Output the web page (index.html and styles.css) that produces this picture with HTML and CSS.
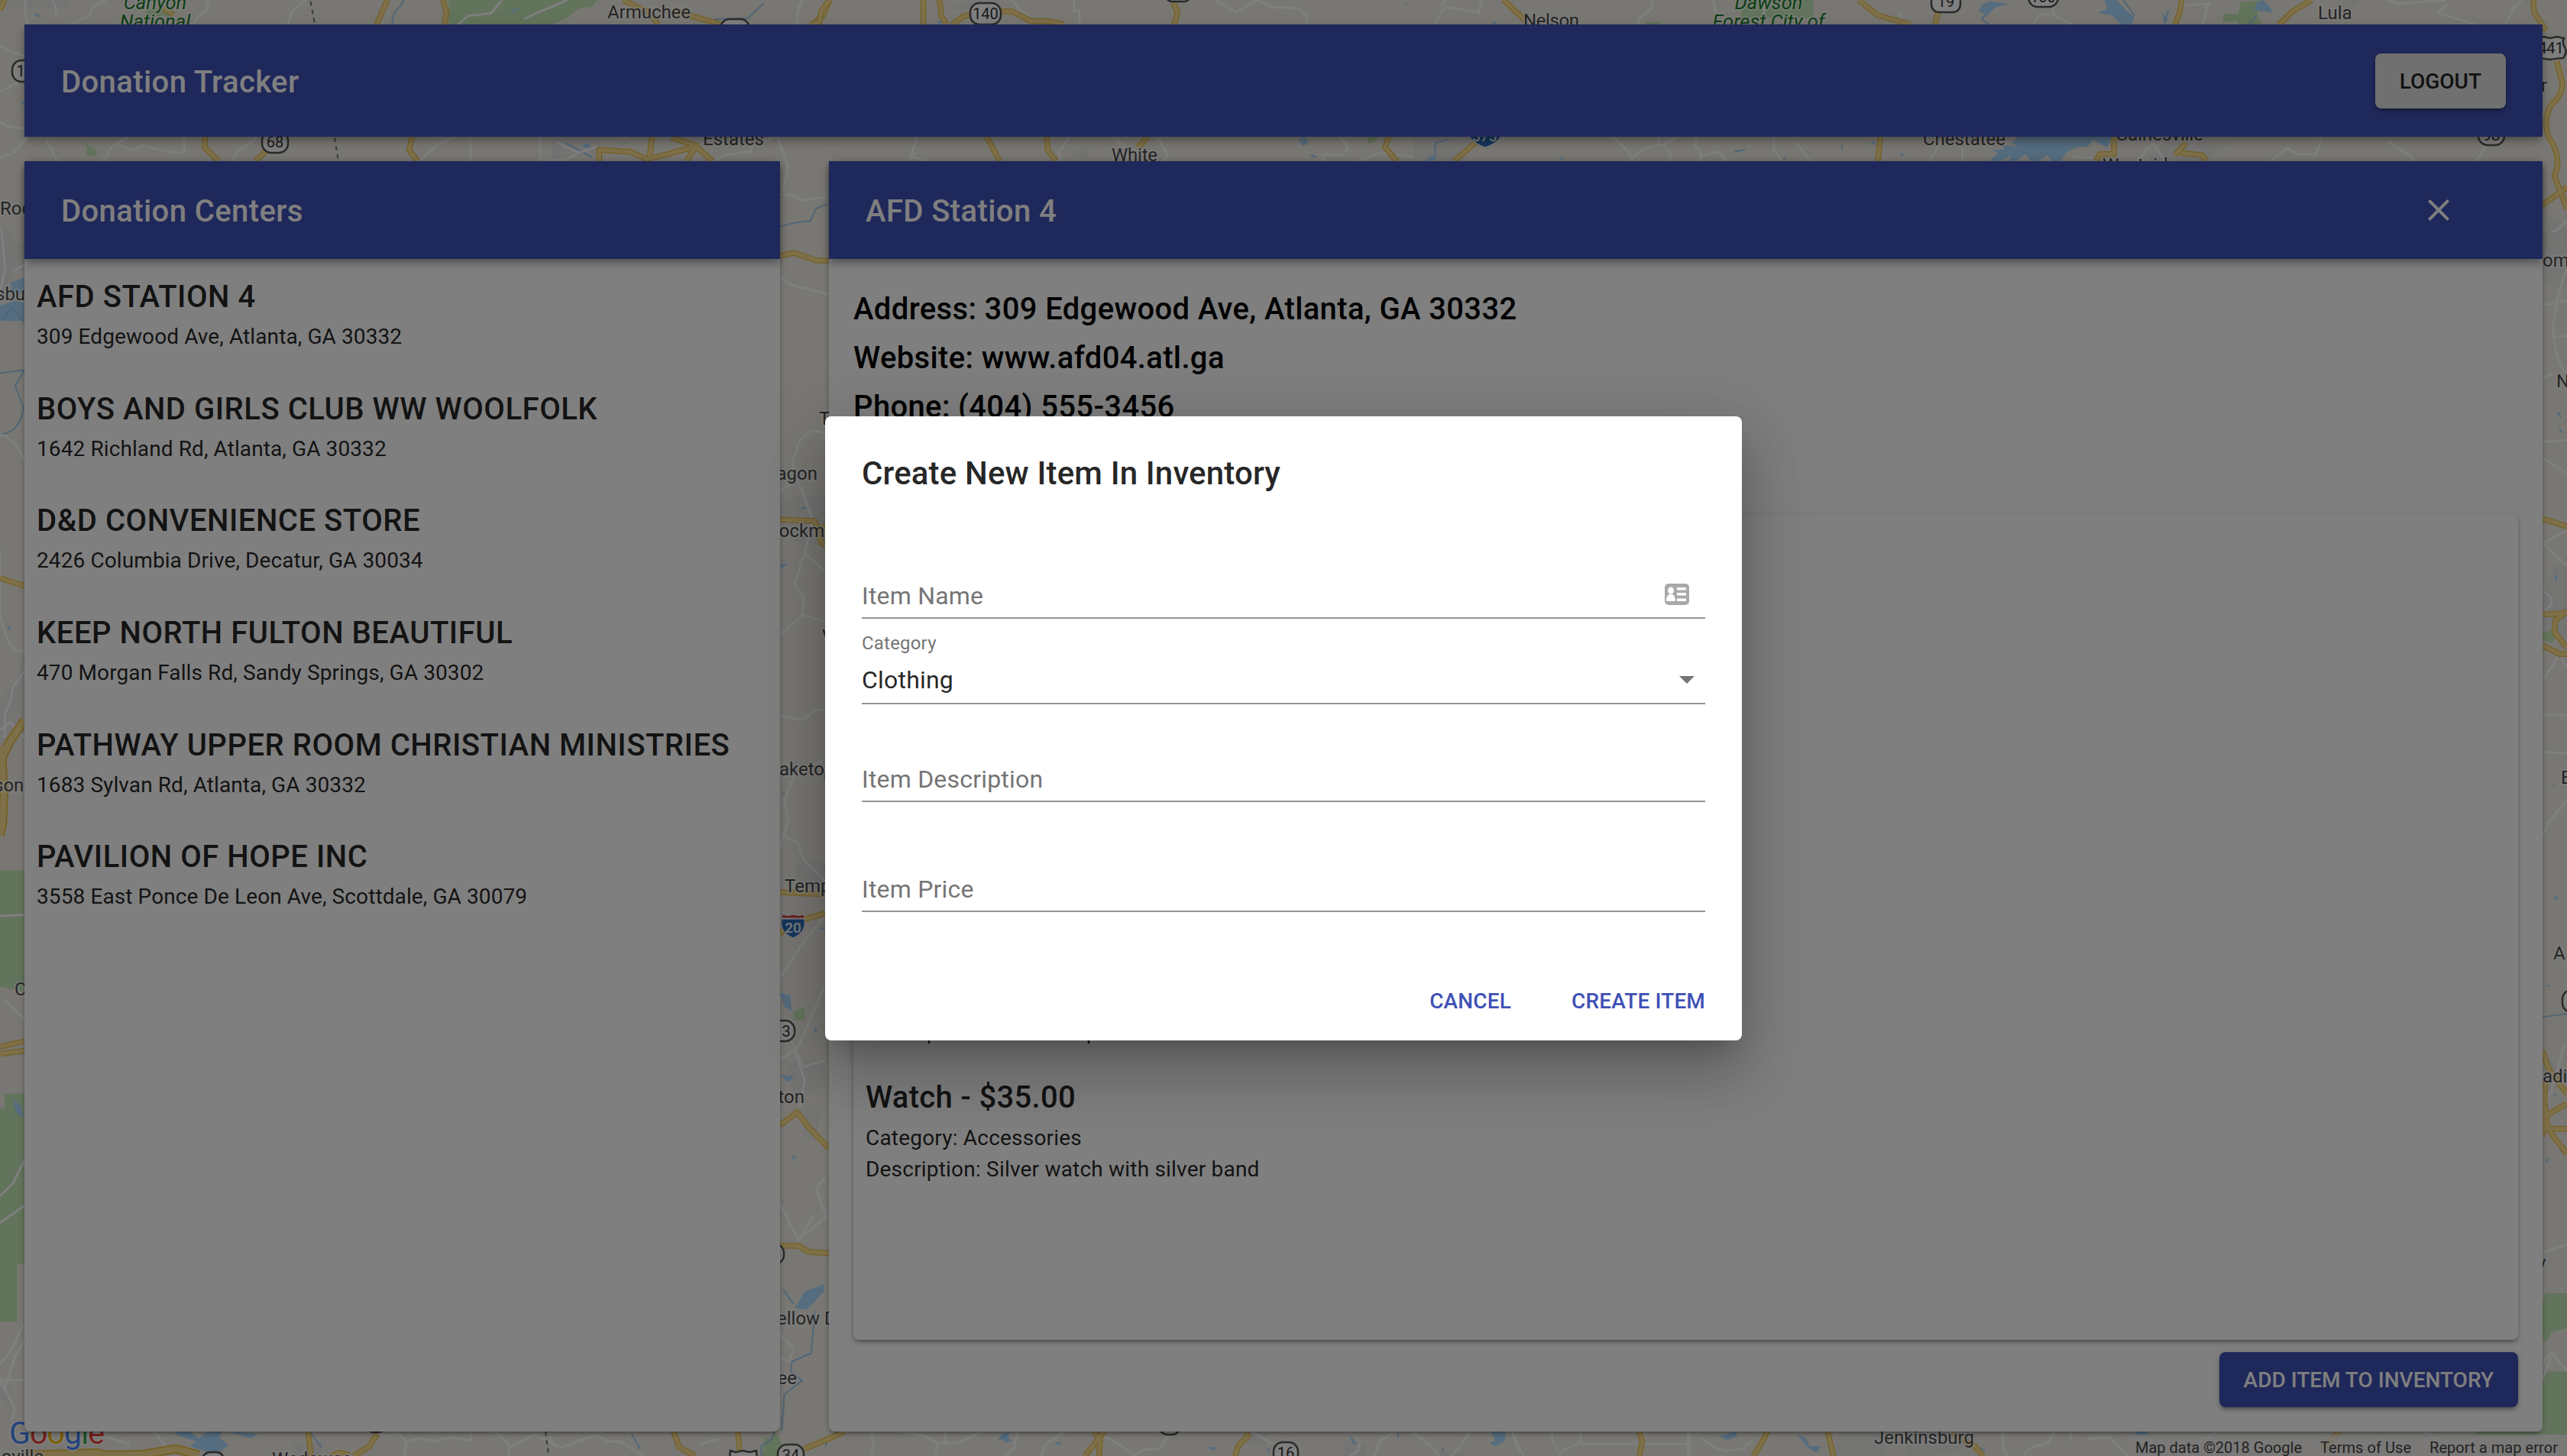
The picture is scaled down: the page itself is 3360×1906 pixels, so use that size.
FILE: index.html
```html
<!DOCTYPE html>
<html lang="en">
<head>
<meta charset="utf-8">
<title>Donation Tracker</title>
<link rel="stylesheet" href="styles.css">
</head>
<body>
<svg class="map" viewBox="0 0 3360 1906" aria-hidden="true">
  <rect class="land" width="3360" height="1906"/>

  <!-- north-west -->
  <g transform="scale(.7143 .3333)">
    <path class="urban" d="M0 0H130L120 30H0ZM0 930L45 960V1060L0 1090ZM1010 537H1100V600L1010 620Z"/>
    <path class="park" d="M822 0H1095L1085 28L1062 32L1040 68L1008 100H822ZM148 537L160 570L178 590L176 614L158 608L160 580ZM268 40L300 30L320 70L300 62L268 62Z"/>
    <path class="water" d="M62 50L72 58L74 68L65 62ZM935 38L953 32L942 48ZM1068 570L1076 562L1082 574L1074 586ZM1140 562L1148 560L1142 572ZM40 400L48 395V412H40ZM18 1110L45 1090V1130L34 1125L24 1130ZM0 1200L30 1180L45 1190V1260H0Z"/>
    <path class="stream" d="M720 96Q715 60 735 20L740 0M1310 75L1370 72L1400 12M1035 560L1085 618M1429 890L1455 875L1485 867L1495 820L1518 800"/>
    <path class="minor" d="M48 0Q42 55 52 96M102 60Q105 30 95 0M130 96L165 60L170 25L195 0M378 0Q388 40 365 60L355 96M560 0L535 45L528 96M840 96L858 62L900 52L920 0M960 75L985 50L1040 0M1460 96Q1460 40 1472 0M0 180Q20 210 45 218M45 310L0 360M0 480L15 498L45 505M0 620L25 600L50 540M85 550L105 632M190 632L205 575L235 537M215 565L245 590L260 570L295 590L335 602M338 600V537M428 632Q430 590 460 560L470 537M770 632L800 570L835 537M862 537V632M990 537V628H1038L1060 600L1020 560M1060 600L1095 575M1310 632L1325 610L1375 595L1385 540M1425 537L1445 660L1435 740M1429 765L1450 765L1470 788L1515 773M1429 1090L1450 1120L1518 1155M0 900Q15 970 0 1000M0 1090L45 1040"/>
    <path class="major-case" d="M0 40L8 0M300 30L318 60M710 0L690 96M812 0L818 50L815 96M1142 0L1170 30L1190 50L1206 96M1235 40L1270 65L1320 94L1320 85M1520 0L1508 60L1490 96M376 537L375 580L400 632M495 580L468 632M755 537L750 590L765 632M1098 632V588L1155 596L1185 625L1225 605L1275 575L1305 632M1190 620L1195 537M1275 575L1258 632M1230 540L1280 575M1429 1005L1455 993L1495 1023H1518"/>
    <path class="major" d="M0 40L8 0M300 30L318 60M710 0L690 96M812 0L818 50L815 96M1142 0L1170 30L1190 50L1206 96M1235 40L1270 65L1320 94L1320 85M1520 0L1508 60L1490 96M376 537L375 580L400 632M495 580L468 632M755 537L750 590L765 632M1098 632V588L1155 596L1185 625L1225 605L1275 575L1305 632M1190 620L1195 537M1275 575L1258 632M1230 540L1280 575M1429 1005L1455 993L1495 1023H1518"/>
    <path class="border" d="M569 5L577 96M613 540L620 632"/>
  </g>

  <!-- north -->
  <g transform="translate(1000) scale(.7143 .3571)">
    <path class="urban" d="M340 40L360 10L400 0V30ZM560 570L595 530V590ZM1190 501H1300L1270 591L1190 580Z"/>
    <path class="park" d="M1108 501H1125L1118 520L1106 528Z"/>
    <path class="water" d="M980 510L990 498L998 522L988 536ZM318 75L328 82L320 90ZM1172 8L1180 12L1176 16ZM1455 578L1465 576L1462 586ZM1210 591L1225 570L1232 586Z"/>
    <path class="stream" d="M1230 580V525L1255 510M1002 568L1012 578M1335 80L1342 90"/>
    <path class="minor" d="M62 90Q60 30 70 0M455 0L468 35L485 60L492 90M568 0V40L578 38V90M828 0L865 45L890 15L905 0L930 25L980 30L995 60V90M1228 90L1248 25L1310 45L1315 0M1240 20L1250 0M0 520L20 501M268 585L280 501M268 575L300 590M545 591L540 560L560 501M640 501L665 545L668 591M720 501L740 570L730 591M1025 591V568H1060L1070 540L1055 501M1090 591L1130 560L1190 575"/>
    <path class="major-case" d="M120 0L105 40L102 80L85 90M292 0V90M322 0L325 60L335 90M345 90L365 60L380 52M430 42H455L490 78L525 78L550 90M750 10L758 45L752 90M1355 0L1395 75M408 501L432 591M518 501L520 550L535 591M704 501L685 540M1145 501L1138 540L1160 591M1305 520L1265 591"/>
    <path class="major" d="M120 0L105 40L102 80L85 90M292 0V90M322 0L325 60L335 90M345 90L365 60L380 52M430 42H455L490 78L525 78L550 90M750 10L758 45L752 90M1355 0L1395 75M408 501L432 591M518 501L520 550L535 591M704 501L685 540M1145 501L1138 540L1160 591M1305 520L1265 591"/>
  </g>
  <g transform="translate(2080) scale(.3333)">
    <path class="park" d="M219 87H281V98H219Z"/>
    <path class="minor" d="M246 0V30Q240 42 210 60Q190 75 194 96M486 0Q496 20 494 50M92 537Q150 590 163 610V632M165 632Q190 590 248 575L290 568L350 537M272 537L276 568M298 568L305 590L320 605V632M425 537L415 575L435 590L440 632M440 615Q480 597 512 598L540 632"/>
    <path class="stream" d="M570 596L600 590"/>
  </g>

  <!-- north-east -->
  <g transform="translate(2240) scale(.7143 .3333)">
    <path class="urban" d="M1130 60L1160 0H1190L1160 50ZM830 560H960L900 632H800ZM1530 880L1550 850L1568 900V1130L1540 1120Z"/>
    <path class="park" d="M55 0H187V70H55ZM970 10L1010 0L1000 60L1010 95H965V85H938V55H965ZM650 560L668 555V585L652 590Z"/>
    <path class="water" d="M495 20L510 5L545 15L520 30L505 60L490 45ZM720 0H742L760 40L775 68L770 96H750L735 60L708 50L725 35ZM995 40L1000 10L1012 0L1020 20L1030 50ZM825 45L838 80L830 85ZM562 537H735L725 580L700 550L690 575L668 580L650 600L640 632H625L615 610L600 632H585L575 605L560 632H545L550 610L530 632H510L525 600L515 590L540 585L530 570L560 575L550 560ZM293 555H300V567H293ZM345 603L355 605L348 615Z"/>
    <path class="stream" d="M505 60Q485 70 510 96M775 60L755 0M838 40L830 96M1000 60L985 96M45 595L62 587M130 632L136 618M240 570L238 585"/>
    <path class="minor" d="M95 60L100 0M345 45L352 96M590 96L600 60L625 55L660 96M625 55L630 0M865 20L915 15M910 20L900 96M1240 0L1260 15L1345 0M1350 15L1330 50L1400 96M1455 96L1470 30L1485 0M0 598Q22 598 25 632M115 537V590L130 632M155 560L170 600L180 632M400 632L420 560L410 540M460 580V632M660 615L700 620M810 560L780 632M810 560L830 632M1025 632L1055 582L1075 606H1108L1120 537M1240 555L1280 610L1288 632M1420 570L1402 632M1523 920L1545 910L1568 870M1523 1200L1568 1180M1545 1070L1568 960"/>
    <path class="major-case" d="M270 0L305 60L365 96M415 50L410 96M862 0L858 50L850 96M1100 0L1065 45L1040 96M1506 0L1508 50L1530 120M310 537L305 632M738 537V605H712L705 632M870 560L850 610M860 600L900 610L907 632M1549 240L1560 330Q1560 370 1540 410Q1522 470 1535 540Q1560 620 1545 690Q1555 750 1568 820M1523 805L1568 735"/>
    <path class="major" d="M270 0L305 60L365 96M415 50L410 96M862 0L858 50L850 96M1100 0L1065 45L1040 96M1506 0L1508 50L1530 120M310 537L305 632M738 537V605H712L705 632M870 560L850 610M860 600L900 610L907 632M1549 240L1560 330Q1560 370 1540 410Q1522 470 1535 540Q1560 620 1545 690Q1555 750 1568 820M1523 805L1568 735"/>
  </g>

  <!-- west edge -->
  <g transform="translate(0 300) scale(.3333 1.0242)">
    <path class="urban" d="M0 0H45L50 60L0 90ZM60 580L96 540V640L0 690V600Z"/>
    <path class="park" d="M0 820H96V975L0 968ZM18 1105H96V1323H68V1397H0V1124H18Z"/>
    <path class="water" d="M38 76L96 62V84L60 82ZM28 510L42 506L38 514ZM50 1112L80 1120L96 1136L60 1128Z"/>
    <path class="stream" d="M0 184L96 180M0 262Q80 260 92 228L60 200L96 180M10 115L50 100L96 120"/>
    <path class="minor" d="M5 0Q15 30 20 50L0 80M0 262Q60 268 96 295M0 410V490Q30 545 96 540M96 565L52 585L40 605L20 620V650M0 878L96 876M20 985L96 1010M0 1236L50 1220L96 1190M0 1270L96 1248M96 1420L60 1440L0 1500M0 640L40 630L96 650"/>
    <path class="major-case wide" d="M96 628L38 655L10 675L0 690M5 660L15 720L10 760L0 775"/>
    <path class="major wide" d="M96 628L38 655L10 675L0 690M5 660L15 720L10 760L0 775"/>
    <path class="major-case" d="M0 446L96 456M0 1054L96 1050M0 1045L96 1038"/>
    <path class="major" d="M0 446L96 456M0 1054L96 1050M0 1045L96 1038"/>
  </g>

  <!-- gap between the panels -->
  <g transform="translate(1000 500) scale(.3333 .8967)">
    <path class="urban" d="M63 170L240 165V235L150 240L63 215ZM125 700H240V740H125ZM170 1055L230 1060L200 1110L150 1100ZM75 990H240V1030L120 1040Z"/>
    <path class="park" d="M115 918L160 914V930L120 932ZM0 1540L45 1546V1568H0Z"/>
    <path class="water" d="M63 892L105 896L107 918L80 912ZM63 1012L120 1014L95 1022ZM195 942L210 944L203 952ZM120 1352L160 1328L235 1317V1328L170 1354ZM68 600L80 598V602ZM63 266L95 265L70 272ZM110 1128L125 1132L115 1137ZM215 798L240 795V800Z"/>
    <path class="stream" d="M75 1325L115 1345M200 1356L185 1418L110 1430L105 1445L150 1458L80 1478L70 1530M145 185L165 183M235 570L240 580"/>
    <path class="minor" d="M240 75L190 70L140 85L110 118L135 142L63 160M135 145L190 200L160 250L120 295L155 315L150 340L240 350M160 250L235 275M155 340L63 368M63 488L150 493L200 480L240 478M63 680L95 640L80 610L120 575L240 550M63 660L130 672L160 700L240 728M63 870L150 820L240 780M63 940L130 975L240 880M63 990L120 975L155 1000L240 990M120 975L160 1020L140 1060M240 1160L205 1180L245 1218L135 1253M63 1200L135 1253L195 1217M63 1390L115 1410L100 1430L63 1425"/>
    <path class="major-case" d="M63 201L200 203L225 235L240 238M225 208L240 225M63 745L240 748M63 806L100 790L240 776M63 1085L130 1066L180 1090L255 1119M63 1261H135L175 1270L255 1272"/>
    <path class="major" d="M63 201L200 203L225 235L240 238M225 208L240 225M63 745L240 748M63 806L100 790L240 776M63 1085L130 1066L180 1090L255 1119M63 1261H135L175 1270L255 1272"/>
  </g>

  <!-- east edge -->
  <g transform="translate(3260 300) scale(.3333 1.0242)">
    <path class="urban" d="M204 0L300 10V60L260 76L204 70ZM204 470L250 430L300 420V520L204 525ZM204 1050L290 1080L204 1120Z"/>
    <path class="park" d="M204 515L245 513L255 522L240 529L204 525ZM204 1370L215 1360H300V1405L240 1410L225 1420L204 1422ZM204 1460H300V1540H204Z"/>
    <path class="water" d="M250 852L270 854L255 858ZM245 1106H262L250 1110ZM215 1190L230 1186L222 1194ZM250 445L262 440L258 452ZM240 712L252 710V713Z"/>
    <path class="stream" d="M204 1007L300 1003M262 234L277 240M270 256L282 260M222 966L232 968"/>
    <path class="minor" d="M300 50Q250 90 245 135Q260 170 300 185M245 137H300M204 190L245 185M204 272L300 270M204 292L300 312M204 402L300 385M204 402L300 430M204 462L235 470L240 480L204 490M204 620L300 622M204 668L300 670M204 775L235 755L300 730M204 578L270 543L300 560M204 1308L300 1298M204 1450L240 1435L300 1460M204 1470L240 1440M290 1042L240 1100L204 1120"/>
    <path class="major-case" d="M204 370L300 380M204 492H245L300 490M300 488L255 500L250 515L300 535M204 532L270 543H300M204 1050L230 1075L300 1105M204 1100L225 1150L300 1182M204 1135L300 1118M204 1150H300M215 1090L204 1160"/>
    <path class="major" d="M204 370L300 380M204 492H245L300 490M300 488L255 500L250 515L300 535M204 532L270 543H300M204 1050L230 1075L300 1105M204 1100L225 1150L300 1182M204 1135L300 1118M204 1150H300M215 1090L204 1160"/>
  </g>

  <!-- south-west -->
  <g transform="translate(0 1600) scale(.7653 .3333)">
    <path class="urban" d="M500 870L550 860V918H500ZM0 650H20V740L0 700Z"/>
    <path class="park" d="M1325 822L1340 880L1330 918H1300L1310 880Z"/>
    <path class="water" d="M300 822H325L340 850L355 822H380L375 845L390 875L370 918L345 895L325 880L335 860L300 835ZM390 822L440 830L430 850Z"/>
    <path class="stream" d="M530 822L550 885M1335 760L1320 850L1302 880V918M1080 830L1095 890M1415 850L1412 880"/>
    <path class="minor" d="M40 400L20 500L0 560M0 620H40M0 620L25 730L20 780M265 822L285 890M180 840L220 870L215 918M635 822L660 840L680 832L695 860L715 848L740 862L770 845L805 858V822M695 855L692 918M845 822L870 870V918M870 885L915 835L960 885L1020 835L1040 862L1060 860L1100 918M950 885L940 840M1230 850L1200 870M1490 822L1495 870L1490 918"/>
    <path class="major-case wide" d="M50 914L165 906L180 914L245 912L300 890L340 914"/>
    <path class="major wide" d="M50 914L165 906L180 914L245 912L300 890L340 914"/>
    <path class="major-case" d="M527 822L532 918M645 830L632 880L605 918M1152 822L1162 885L1190 918M1262 822L1265 895M1445 822L1375 892M565 918L580 905L598 915"/>
    <path class="major" d="M527 822L532 918M645 830L632 880L605 918M1152 822L1162 885L1190 918M1262 822L1265 895M1445 822L1375 892M565 918L580 905L598 915"/>
    <path class="border" d="M933 822L938 910"/>
  </g>

  <!-- south -->
  <g transform="translate(1180 1866) scale(.6633 .3333)">
    <path class="urban" d="M685 24H720V80L660 70ZM875 60L917 70V120H873ZM1060 105H1110V120H1060Z"/>
    <path class="water" d="M200 30L212 28L210 50L218 58L206 68L200 55L190 60ZM303 68L312 64L316 74L304 74ZM606 86L620 84V94L612 98ZM1163 24H1193L1190 60L1172 82L1160 70L1172 60ZM883 36L890 50L900 74L890 72Z"/>
    <path class="stream" d="M980 30V46M1068 90V104M408 50L416 66M724 90V104"/>
    <path class="minor" d="M0 24L45 40L72 70L66 120M85 24L87 70M72 70H112L160 24M230 24L222 90L205 120M320 24L285 75L275 120M402 44L430 75L460 118L478 95L510 93L525 40M690 24L735 75M905 60L900 100L885 120M932 120L945 60L970 30M1010 30L1045 80L1062 120M1120 30L1100 90L1085 120M1205 24L1215 80L1228 120M1284 24L1285 65L1298 108M1298 118L1300 104L1335 70M1340 24V72H1552M1552 24V120M1466 24V72"/>
    <path class="major-case" d="M380 24L392 60L390 120M400 24L362 120M680 24L684 40L665 80L658 120M1455 24L1462 60L1456 120"/>
    <path class="major" d="M380 24L392 60L390 120M400 24L362 120M680 24L684 40L665 80L658 120M1455 24L1462 60L1456 120"/>
  </g>

  <!-- south-east -->
  <g transform="translate(2200 1600) scale(.7398 .3333)">
    <path class="urban" d="M280 822H360V918H270ZM400 822H520V880L440 918H400Z"/>
    <path class="park" d="M1407 822H1568V834H1407Z"/>
    <path class="water" d="M68 840L98 822L100 840L82 855ZM803 822H827V834L805 836ZM205 830L222 850L228 880L248 880L240 905L225 885ZM528 885L540 890L532 900Z"/>
    <path class="minor" d="M38 850L60 885L80 898L110 890L125 860M15 822V918M570 822V890L580 918M605 918L620 885L650 865L660 822M690 822V860M720 850L760 845L790 918M950 822L910 870M1315 822L1340 850M870 870L900 918"/>
    <path class="major-case" d="M153 822L145 860L128 918M260 822L270 918M480 830L520 880L535 918M1165 822L1135 890"/>
    <path class="major" d="M153 822L145 860L128 918M260 822L270 918M480 830L520 880L535 918M1165 822L1135 890"/>
  </g>

  <!-- route shields -->
  <g class="shield">
    <rect x="1270" y="4" width="40" height="28" rx="12"/><text x="1290" y="25">140</text>
    <rect x="943" y="25" width="38" height="28" rx="12"/>
    <rect x="343" y="172" width="34" height="28" rx="12"/><text x="360" y="193">68</text>
    <rect x="16" y="79" width="34" height="28" rx="12"/><text x="27" y="100">1</text>
    <rect x="2528" y="-11" width="38" height="27" rx="10"/><text x="2547" y="9">19</text>
    <rect x="2655" y="-18" width="39" height="27" rx="12"/><text x="2674" y="3">100</text>
    <rect x="1526" y="-24" width="32" height="26" rx="8"/>
    <rect x="3244" y="163" width="34" height="27" rx="12"/><text x="3261" y="184">98</text>
    <path d="M3322 50l7-2 9 2 9-2 9 2q-3 5 1 12t-2 14q-6 0-17 2-12-2-18-2z"/><text x="3339" y="70">441</text>
    <rect x="1005" y="1336" width="35" height="27" rx="12"/><text x="1029" y="1357">3</text>
    <rect x="990" y="1628" width="36" height="27" rx="12"/>
    <rect x="3354" y="1296" width="34" height="29" rx="12"/>
    <rect x="1018" y="1891" width="34" height="28" rx="12"/><text x="1035" y="1912">34</text>
    <path d="M956 1899l7 2 9-2 9 2 9-2 1 12h-36z"/>
    <rect x="265" y="1901" width="28" height="20" rx="10"/>
    <rect x="480" y="1852" width="24" height="23" rx="10"/>
    <rect x="1518" y="1853" width="26" height="25" rx="10"/>
    <rect x="1667" y="1888" width="32" height="28" rx="12"/><text x="1683" y="1909">16</text>
  </g>
  <g class="interstate">
    <path d="M1922 166h44q3 18-22 27-25-9-22-27z"/><text x="1943" y="185">575</text>
    <path d="M1023 1203h30q3 17-15 25-18-8-15-25z"/><path class="crest" d="M1024 1197q7 3 14 0 7 3 14 0l1 5h-30z"/><text x="1038" y="1221">20</text>
  </g>

  <!-- place names -->
  <g class="places">
    <text x="795" y="24" textLength="109">Armuchee</text>
    <text x="920" y="190" textLength="80">Estates</text>
    <text x="1455" y="211" textLength="60">White</text>
    <text x="1994" y="35" textLength="73">Nelson</text>
    <text x="3034" y="25">Lula</text>
    <text x="2517" y="190" textLength="108">Chestatee</text>
    <text x="2769" y="184" textLength="115">Gainesville</text>
    <text x="2752" y="224">Westside</text>
    <text x="0" y="281">Rockmart</text>
    <text x="-6" y="393">sbur</text>
    <text x="-8" y="1036">sonv</text>
    <text x="19" y="1303">C</text>
    <text x="1072" y="556">T</text>
    <text x="1070" y="628" text-anchor="end">Aragon</text>
    <text x="1005" y="703">Rockmart</text>
    <text x="1076" y="841">V</text>
    <text x="1020" y="1015">aketown</text>
    <text x="1027" y="1168">Temple</text>
    <text x="1053" y="1444" text-anchor="end">ton</text>
    <text x="1017" y="1734">ellow Dirt</text>
    <text x="1043" y="1812" text-anchor="end">ee</text>
    <text x="3328" y="349">omm</text>
    <text x="3346" y="507">N</text>
    <text x="3352" y="1026">B</text>
    <text x="3342" y="1256">A</text>
    <text x="3328" y="1417">adison</text>
    <text x="3321" y="1661">y</text>
    <text x="3326" y="120">r</text>
    <text x="57" y="1915" text-anchor="end">noville</text>
    <text x="356" y="1918">Wedowee</text>
    <text x="2453" y="1890" textLength="131">Jenkinsburg</text>
    <g class="forest">
      <text x="203" y="12" text-anchor="middle">Canyon</text>
      <text x="203" y="37" text-anchor="middle">National</text>
      <text x="2315" y="12" text-anchor="middle">Dawson</text>
      <text x="2315" y="37" text-anchor="middle">Forest City of</text>
    </g>
  </g>

  <rect class="legal-strip" x="2786" y="1878" width="574" height="28"/>
  <g class="legal">
    <text x="2795" y="1902" textLength="218">Map data ©2018 Google</text>
    <text x="3037" y="1902" textLength="119">Terms of Use</text>
    <text x="3180" y="1902" textLength="168">Report a map error</text>
  </g>
  <text class="wordmark" x="12" y="1890" textLength="125"><tspan fill="#4285f4">G</tspan><tspan fill="#ea4335">o</tspan><tspan fill="#fbbc05">o</tspan><tspan fill="#4285f4">g</tspan><tspan fill="#34a853">l</tspan><tspan fill="#ea4335">e</tspan></text>
</svg>

<div class="app">
  <header class="bar app-bar">
    <h1 class="bar-title">Donation Tracker</h1>
    <button class="button button-default">Logout</button>
  </header>
  <main class="panels">
    <section class="panel centers">
      <div class="bar"><h2 class="bar-title">Donation Centers</h2></div>
      <ul class="center-list">
        <li class="entry"><h3 class="entry-title">AFD STATION 4</h3><p>309 Edgewood Ave, Atlanta, GA 30332</p></li>
        <li class="entry"><h3 class="entry-title">BOYS AND GIRLS CLUB WW WOOLFOLK</h3><p>1642 Richland Rd, Atlanta, GA 30332</p></li>
        <li class="entry"><h3 class="entry-title">D&amp;D CONVENIENCE STORE</h3><p>2426 Columbia Drive, Decatur, GA 30034</p></li>
        <li class="entry"><h3 class="entry-title">KEEP NORTH FULTON BEAUTIFUL</h3><p>470 Morgan Falls Rd, Sandy Springs, GA 30302</p></li>
        <li class="entry"><h3 class="entry-title">PATHWAY UPPER ROOM CHRISTIAN MINISTRIES</h3><p>1683 Sylvan Rd, Atlanta, GA 30332</p></li>
        <li class="entry"><h3 class="entry-title">PAVILION OF HOPE INC</h3><p>3558 East Ponce De Leon Ave, Scottdale, GA 30079</p></li>
      </ul>
    </section>
    <section class="panel detail">
      <div class="bar">
        <h2 class="bar-title">AFD Station 4</h2>
        <svg class="close" viewBox="0 0 24 24"><path d="M19 6.41L17.59 5 12 10.59 6.41 5 5 6.41 10.59 12 5 17.59 6.41 19 12 13.41 17.59 19 19 17.59 13.41 12z"/></svg>
      </div>
      <div class="detail-body">
        <div class="facts">
          <p>Address: 309 Edgewood Ave, Atlanta, GA 30332</p>
          <p>Website: www.afd04.atl.ga</p>
          <p>Phone: (404) 555-3456</p>
        </div>
        <div class="inventory">
          <div class="entry"><p>Description: Black and pink dresses</p></div>
          <div class="entry"><h3 class="entry-title">Watch - $35.00</h3><p>Category: Accessories</p><p>Description: Silver watch with silver band</p></div>
        </div>
        <button class="button button-primary">Add item to inventory</button>
      </div>
    </section>
  </main>
</div>

<div class="backdrop">
  <form class="dialog">
    <h2 class="dialog-title">Create New Item In Inventory</h2>
    <div class="field field-name"><span class="placeholder">Item Name</span>
      <svg class="contact" viewBox="0 0 32 28"><rect width="32" height="28" rx="5" fill="#a9a9a9"/><g fill="#fff"><ellipse cx="8" cy="9" rx="4" ry="4.5"/><path d="M2 23q0-7 4-9h4q4 2 4 9zM16 5h12v3.500H16zM16 12h12v3.500H16zM16 19.500h12v3.500H16z"/></g></svg>
    </div>
    <div class="field field-category"><span class="label">Category</span><span class="value">Clothing</span>
      <svg class="arrow" viewBox="0 0 24 24"><path d="M7 10l5 5 5-5z"/></svg>
    </div>
    <div class="field field-description"><span class="placeholder">Item Description</span></div>
    <div class="field field-price"><span class="placeholder">Item Price</span></div>
    <div class="actions"><button type="button" class="link">Cancel</button><button type="button" class="link">Create item</button></div>
  </form>
</div>
</body>
</html>
```
FILE: styles.css
```css
* { box-sizing: border-box; margin: 0; padding: 0; }
body { width: 3360px; height: 1906px; overflow: hidden; font-family: Roboto, "Liberation Sans", sans-serif; font-size: 28px; line-height: 41px; letter-spacing: .1px; color: rgba(0, 0, 0, .87); }
button { border: 0; font: 500 28px/41px Roboto, sans-serif; text-transform: uppercase; }
ul { list-style: none; }

/* map */
.map { position: absolute; inset: 0; width: 3360px; height: 1906px; letter-spacing: 0; }
.map path { vector-effect: non-scaling-stroke; }
.land { fill: #f2efe6; }
.urban { fill: #e9e8e6; }
.park { fill: #c5e8b7; }
.water { fill: #aadaff; }
.stream { fill: none; stroke: #9fcdf0; stroke-width: 2; }
.minor { fill: none; stroke: #fff; stroke-width: 3; stroke-linejoin: round; }
.major-case { fill: none; stroke: #edc04d; stroke-width: 7.5; stroke-linejoin: round; }
.major { fill: none; stroke: #fde293; stroke-width: 5; stroke-linejoin: round; }
.major-case.wide { stroke-width: 12; }
.major.wide { stroke-width: 8; }
.border { fill: none; stroke: #777; stroke-width: 2; stroke-dasharray: 6 5; }
.shield rect, .shield path { fill: #fff; stroke: #555; stroke-width: 2.500; }
.shield text { font-size: 20px; text-anchor: middle; fill: #333; }
.interstate path { fill: #2a6fbd; stroke: #fff; stroke-width: 1; }
.interstate .crest { fill: #d0453e; }
.interstate text { font-size: 19px; font-weight: 500; text-anchor: middle; fill: #fff; }
.places text { font-size: 24px; fill: #4a4a4a; stroke: #fff; stroke-width: 4; stroke-linejoin: round; stroke-opacity: .6; paint-order: stroke; }
.places .forest text { font-size: 25.5px; fill: #1a7f2a; font-style: italic; }
.legal-strip { fill: #f5f5f5; fill-opacity: .7; }
.legal text { font-size: 20px; fill: #444; }
.wordmark { font-size: 41px; stroke: #fff; stroke-width: 3; paint-order: stroke; }

/* page */
.app { position: relative; isolation: isolate; height: 1906px; padding: 32px; display: flex; flex-direction: column; gap: 32px; }
.bar { position: relative; z-index: 1; height: 128px; padding: 0 48px; display: flex; align-items: center; justify-content: space-between; background: #3f51b5; color: #fff; box-shadow: 0 4px 8px -2px rgba(0, 0, 0, .2), 0 8px 10px rgba(0, 0, 0, .14), 0 2px 20px rgba(0, 0, 0, .12); }
.app-bar { height: 147px; flex: none; }
.bar-title { padding-top: 4px; font-size: 40px; font-weight: 500; line-height: 64px; letter-spacing: .4px; }
.panels { flex: 1; min-height: 0; display: flex; gap: 64px; }
.panel { background: #fff; border-radius: 8px; display: flex; flex-direction: column; box-shadow: 0 2px 10px rgba(0, 0, 0, .2), 0 4px 4px rgba(0, 0, 0, .14), 0 6px 2px -4px rgba(0, 0, 0, .12); }
.centers { width: 989px; }
.detail { flex: 1; }
.center-list { padding: 18px 16px; }
.center-list .entry { height: 146.700px; }
.entry-title { font-size: 40px; font-weight: 500; line-height: 64px; letter-spacing: .53px; }
.center-list .entry-title { line-height: 63px; }
.button { height: 72px; padding: 1px 32px 0; border-radius: 8px; box-shadow: 0 2px 10px rgba(0, 0, 0, .2), 0 4px 4px rgba(0, 0, 0, .14), 0 6px 2px -4px rgba(0, 0, 0, .12); }
.button-default { background: #e0e0e0; color: rgba(0, 0, 0, .87); }
.button-primary { background: #3f51b5; color: #fff; }
.close { width: 48px; height: 48px; margin-right: 64px; fill: #fff; }
.detail-body { flex: 1; padding: 34px 32px 32px; display: flex; flex-direction: column; align-items: flex-end; }
.facts { align-self: stretch; height: 301px; font-size: 40px; font-weight: 500; line-height: 64px; color: #000; letter-spacing: .35px; }
.inventory { align-self: stretch; height: 1080px; margin-bottom: 16px; padding: 0 16px 203px; border-radius: 8px; display: flex; flex-direction: column; justify-content: flex-end; gap: 34px; letter-spacing: .2px; box-shadow: 0 2px 10px rgba(0, 0, 0, .2), 0 4px 4px rgba(0, 0, 0, .14), 0 6px 2px -4px rgba(0, 0, 0, .12); }
.inventory .entry-title { letter-spacing: .3px; }

/* dialog */
.backdrop { position: absolute; inset: 0; display: flex; align-items: center; justify-content: center; background: rgba(0, 0, 0, .5); }
.dialog { width: 1200px; height: 817px; padding: 50px 48px 46px; border-radius: 8px; background: #fff; display: flex; flex-direction: column; box-shadow: 0 22px 30px -14px rgba(0, 0, 0, .2), 0 48px 76px 6px rgba(0, 0, 0, .14), 0 18px 92px 16px rgba(0, 0, 0, .12); }
.dialog-title { font-size: 42px; font-weight: 500; line-height: 49px; letter-spacing: .15px; }
.field { position: relative; flex: none; display: flex; flex-direction: column; justify-content: flex-end; border-bottom: 2px solid #949494; font-size: 32px; line-height: 38px; letter-spacing: .2px; }
.placeholder { padding-bottom: 9px; color: #757575; }
.field-name { height: 166px; }
.field-category { height: 112px; }
.field-description { height: 128px; }
.field-price { height: 144px; }
.label { font-size: 24px; line-height: 24px; color: #757575; margin-bottom: 17px; }
.value { padding-bottom: 11px; }
.contact { position: absolute; right: 21px; bottom: 16px; width: 32px; height: 28px; }
.arrow { position: absolute; right: 0; bottom: 7px; width: 48px; height: 48px; fill: #757575; }
.actions { margin-top: 96px; display: flex; justify-content: flex-end; gap: 79px; }
.link { background: none; color: #3f51b5; letter-spacing: .15px; }
```
